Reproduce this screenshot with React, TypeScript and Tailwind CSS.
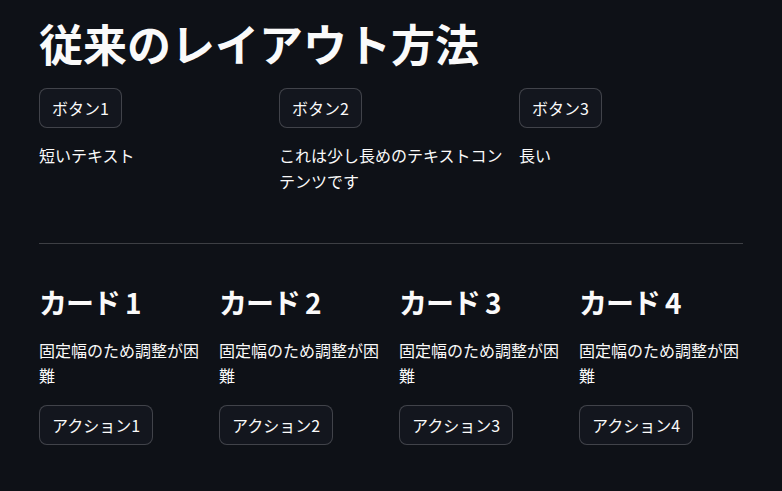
import React from "react";

const font = "font-['Noto_Sans_CJK_JP','Noto_Sans_CJK_SC',sans-serif]";

function Btn({ label }: { label: string }) {
  return (
    <button className="h-[40px] self-start flex items-center px-3 rounded-lg border border-[rgba(250,250,250,0.2)] bg-[#13161e] text-[16px] text-[#fafafa] leading-none">
      {label}
    </button>
  );
}

export default function App() {
  const cols = [
    { b: "ボタン1", t: "短いテキスト" },
    { b: "ボタン2", t: "これは少し長めのテキストコンテンツです" },
    { b: "ボタン3", t: "長い" },
  ];
  const cards = [1, 2, 3, 4];
  return (
    <div className={`min-h-screen bg-[#0e1117] text-[#fafafa] ${font}`}>
      <div className="pl-[39px] w-[743px] flex flex-col">
        <h1 className="mt-[17px] text-[44px] leading-[52px] font-bold">従来のレイアウト方法</h1>
        <div className="mt-[19px] grid grid-cols-3 gap-x-4">
          {cols.map((c) => (
            <div key={c.b} className="flex flex-col gap-[15px]">
              <Btn label={c.b} />
              <p className="text-[16px] leading-[25.6px]">{c.t}</p>
            </div>
          ))}
        </div>
        <hr className="mt-[49px] border-0 border-t border-[rgba(250,250,250,0.2)]" />
        <div className="mt-[42px] grid grid-cols-4 gap-x-4">
          {cards.map((n) => (
            <div key={n} className="flex flex-col">
              <h3 className="text-[28px] leading-[33.6px] font-semibold tracking-[-0.04em]">カード {n}</h3>
              <p className="mt-[18px] text-[16px] leading-[25.6px]">固定幅のため調整が困難</p>
              <div className="mt-[16px] flex">
                <Btn label={`アクション${n}`} />
              </div>
            </div>
          ))}
        </div>
      </div>
    </div>
  );
}
